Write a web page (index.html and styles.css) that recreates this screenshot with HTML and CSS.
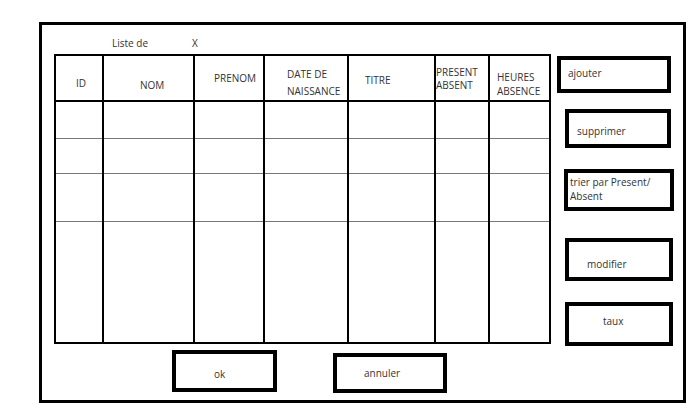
FILE: index.html
```
<!DOCTYPE html>
<html lang="fr">
<head>
    <meta charset="UTF-8">
    <title>Liste de X</title>
    <link rel="stylesheet" href="styles.css">
</head>
<body>

    <div class="frame">

        <div class="main">
            <div class="title">
                <span>Liste de</span>
                <span class="title-x">X</span>
            </div>

            <table class="grid">
                <colgroup>
                    <col class="c-id">
                    <col class="c-nom">
                    <col class="c-prenom">
                    <col class="c-date">
                    <col class="c-titre">
                    <col class="c-present">
                    <col class="c-heures">
                </colgroup>
                <thead>
                    <tr class="head">
                        <th class="h-id">ID</th>
                        <th class="h-nom">NOM</th>
                        <th class="h-prenom">PRENOM</th>
                        <th class="h-date">DATE DE<br>NAISSANCE</th>
                        <th class="h-titre">TITRE</th>
                        <th class="h-present">PRESENT<br>ABSENT</th>
                        <th class="h-heures">HEURES<br>ABSENCE</th>
                    </tr>
                </thead>
                <tbody>
                    <tr class="row1"><td></td><td></td><td></td><td></td><td></td><td></td><td></td></tr>
                    <tr class="row2"><td></td><td></td><td></td><td></td><td></td><td></td><td></td></tr>
                    <tr class="row3"><td></td><td></td><td></td><td></td><td></td><td></td><td></td></tr>
                    <tr class="row4"><td></td><td></td><td></td><td></td><td></td><td></td><td></td></tr>
                </tbody>
            </table>

            <div class="bottom-bar">
                <div class="box btn-ok">ok</div>
                <div class="box btn-annuler">annuler</div>
            </div>
        </div>

        <div class="side">
            <div class="box btn-ajouter">ajouter</div>
            <div class="box btn-supprimer">supprimer</div>
            <div class="box btn-trier">trier par Present/<br>Absent</div>
            <div class="box btn-modifier">modifier</div>
            <div class="box btn-taux">taux</div>
        </div>

    </div>

</body>
</html>
```

FILE: styles.css
```
body {
    margin: 0;
    background-color: #fff;
    font-family: 'Open Sans', 'DejaVu Sans', sans-serif;
    font-size: 10px;
    color: #333;
}

/* outer window drawn by hand */
.frame {
    box-sizing: border-box;
    display: flex;
    margin: 22px 0 0 39px;
    width: 647px;
    height: 381px;
    border: 3px solid #000;
}

.main {
    width: 515px;
    padding-left: 12px;
    box-sizing: border-box;
}

.title {
    display: flex;
    margin: 11px 0 0 58px;
    line-height: 14px;
    height: 14px;
}

.title-x {
    margin-left: 44px;
}

/* the table */
.grid {
    border-collapse: collapse;
    table-layout: fixed;
    width: 495px;
    margin-top: 4px;
    border-top: 2px solid #000;
}

.c-id { width: 48px; }
.c-nom { width: 91px; }
.c-prenom { width: 70px; }
.c-date { width: 84px; }
.c-titre { width: 87px; }
.c-present { width: 54px; }
.c-heures { width: 61px; }

th, td {
    border-left: 2px solid #000;
    border-right: 2px solid #000;
    padding: 0;
}

th {
    font-weight: normal;
    text-align: left;
    vertical-align: top;
    line-height: 13px;
    border-bottom: 2px solid #000;
    white-space: nowrap;
}

td {
    border-bottom: 1px solid #777;
}

.head { height: 46px; }
.row1 { height: 37px; }
.row2 { height: 35px; }
.row3 { height: 48px; }
.row4 td { height: 120px; border-bottom: 2px solid #000; }

.h-id { padding: 21px 0 0 20px; }
.h-nom { padding: 23px 0 0 36px; }
.h-prenom { padding: 16px 0 0 19px; }
.h-date { padding: 10px 0 0 22px; line-height: 17px; }
.h-titre { padding: 18px 0 0 16px; }
.h-present { padding: 10px 0 0 0; }
.h-heures { padding: 14px 0 0 7px; line-height: 14px; }

/* buttons drawn as boxes */
.box {
    box-sizing: border-box;
    border: 4px solid #000;
    line-height: 14px;
}

.bottom-bar {
    display: flex;
    align-items: flex-start;
    margin-top: 6px;
}

.btn-ok {
    margin-left: 118px;
    width: 105px;
    height: 42px;
    padding: 13px 0 0 38px;
}

.btn-annuler {
    margin: 3px 0 0 56px;
    width: 114px;
    height: 40px;
    padding: 9px 0 0 27px;
}

.side {
    display: flex;
    flex-direction: column;
    padding-top: 31px;
}

.btn-ajouter {
    width: 114px;
    height: 37px;
    padding: 6px 0 0 7px;
}

.btn-supprimer {
    margin: 16px 0 0 8px;
    width: 106px;
    height: 39px;
    padding: 11px 0 0 8px;
}

.btn-trier {
    margin: 21px 0 0 7px;
    width: 110px;
    height: 42px;
    padding: 2px 0 0 2px;
}

.btn-modifier {
    margin: 27px 0 0 8px;
    width: 108px;
    height: 43px;
    padding: 15px 0 0 18px;
}

.btn-taux {
    margin: 21px 0 0 8px;
    width: 108px;
    height: 44px;
    padding: 8px 0 0 34px;
}
```
